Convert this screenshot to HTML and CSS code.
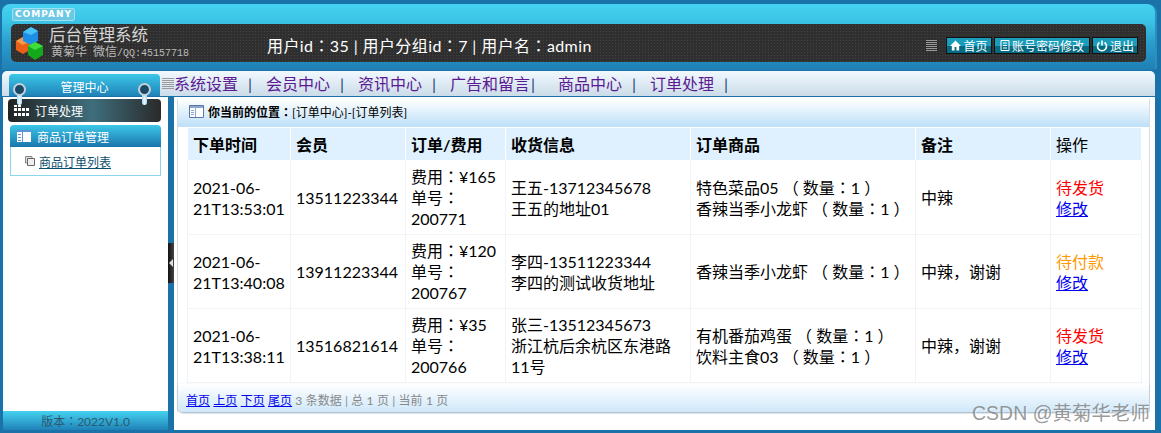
FILE: index.html
```html
<!DOCTYPE html>
<html lang="zh-CN">
  <head>
    <meta charset="UTF-8" />
    <title>后台管理系统</title>
    <link rel="stylesheet" href="styles.css">
  </head>
  <body>
    <div class="app">
      <header class="top">
        <div class="company">COMPANY</div>
        <div class="top-bar">
          <svg class="logo" width="30" height="34" viewBox="0 0 30 34">
            <polygon points="2,15 9,11 16,15 16,24 9,28 2,24" fill="#e8601a" />
            <polygon points="2,15 9,11 16,15 9,19" fill="#f79a4a" />
            <polygon points="9,6 17,1 24,5 24,15 17,19 9,15" fill="#1d8fe8" />
            <polygon points="9,6 17,1 24,5 17,9" fill="#49c4f7" />
            <polygon points="14,20 21,16 29,20 29,29 21,34 14,29" fill="#14a81c" />
            <polygon points="14,20 21,16 29,20 21,24" fill="#3fdc3a" />
          </svg>
          <div class="brand">
            <div class="brand-title">后台管理系统</div>
            <div class="brand-sub">黄菊华 微信<span class="brand-num">/QQ:45157718</span></div>
          </div>
          <div class="user-info">用户id<span class="colon" lang="zh-TW">：</span>35 | 用户分组id<span class="colon" lang="zh-TW">：</span>7 | 用户名<span class="colon" lang="zh-TW">：</span>admin</div>
          <div class="top-tools">
            <span class="grip grip-dark"></span>
            <a class="tool-btn" href="#">
              <svg width="11" height="11" viewBox="0 0 12 11"><path d="M6 0 12 6H10V11H7V7H5V11H2V6H0Z" fill="#fff" /></svg>首页</a>
            <a class="tool-btn tool-wide" href="#">
              <svg width="10" height="11" viewBox="0 0 10 11"><path d="M1 .5H9V10.500H1ZM3 3H7M3 5.500H7M3 8H7" fill="none" stroke="#fff" /></svg>账号密码修改</a>
            <a class="tool-btn" href="#">
              <svg width="12" height="12" viewBox="0 0 12 12"><path d="M3.500 2.500A4.500 4.500 0 1 0 8.500 2.500M6 .5V5.500" fill="none" stroke="#fff" stroke-width="1.600" /></svg>退出</a>
          </div>
        </div>
      </header>

      <nav class="nav">
        <div class="nav-tab">管理中心</div>
        <span class="grip"></span>
        <div class="nav-links">
          <a href="#">系统设置</a><span class="sep">|</span>
          <a href="#">会员中心</a><span class="sep">|</span>
          <a href="#">资讯中心</a><span class="sep">|</span>
          <a href="#">广告和留言</a><span class="sep">|</span>
          <a href="#">商品中心</a><span class="sep">|</span>
          <a href="#">订单处理</a><span class="sep">|</span>
        </div>
        <i class="pin pin-left"></i>
        <i class="pin pin-right"></i>
      </nav>

      <div class="content">
        <aside class="side">
          <div class="side-current">
            <svg width="15" height="11" viewBox="0 0 15 11">
              <path d="M0 3H3V6H0ZM4 3H7V6H4ZM8 3H11V6H8ZM12 3H15V6H12ZM0 8H3V11H0ZM4 8H7V11H4ZM8 8H11V11H8ZM12 8H15V11H12ZM0 0H3V2H0ZM4 0H7V2H4Z" fill="#fff" />
            </svg>
            订单处理
          </div>
          <div class="side-group">
            <div class="side-group-title">
              <svg width="14" height="12" viewBox="0 0 14 12">
                <path d="M0 0H14V12H0Z" fill="#fff" />
                <path d="M0 0H14V2H0ZM5 2H6V12H5ZM1 4H4V5H1ZM1 7H4V8H1ZM1 10H4V11H1Z" fill="#5b95d8" />
              </svg>
              商品订单管理
            </div>
            <div class="side-group-body">
              <svg width="10" height="10" viewBox="0 0 10 10">
                <path d="M.5.5H7V7H.5Z" fill="#ddd" stroke="#888" />
                <path d="M2.500 2.500H9.500V9.500H2.500Z" fill="#eee" stroke="#666" />
              </svg>
              <a href="#">商品订单列表</a>
            </div>
          </div>
          <div class="side-foot">版本<span class="colon" lang="zh-TW">：</span>2022V1.0</div>
        </aside>

        <div class="splitter"><span class="arrow"></span></div>

        <main class="main">
          <div class="main-box">
            <div class="crumb">
              <svg width="15" height="13" viewBox="0 0 15 13">
                <path d="M.5.5H14.500V12.500H.5Z" fill="#fff" stroke="#5a76a8" />
                <path d="M1 1H14V3H1ZM6 3H7V12H6ZM2 5H5V6H2ZM2 7H5V8H2ZM2 9H5V10H2Z" fill="#8fa6cc" />
              </svg>
              <b>你当前的位置<span class="colon" lang="zh-TW">：</span></b>[订单中心]-[订单列表]
            </div>

            <table class="orders">
              <colgroup>
                <col class="c-time" /><col class="c-user" /><col class="c-fee" /><col class="c-addr" />
                <col class="c-goods" /><col class="c-note" /><col class="c-op" />
              </colgroup>
              <thead>
                <tr>
                  <th>下单时间</th><th>会员</th><th>订单/费用</th><th>收货信息</th>
                  <th>订单商品</th><th>备注</th><th class="th-plain">操作</th>
                </tr>
              </thead>
              <tbody>
                <tr>
                  <td>2021-06-21T13:53:01</td>
                  <td>13511223344</td>
                  <td>费用<span class="colon" lang="zh-TW">：</span>¥165<br />单号<span class="colon" lang="zh-TW">：</span>200771</td>
                  <td>王五-13712345678<br />王五的地址01</td>
                  <td>特色菜品05 （ 数量<span class="colon" lang="zh-TW">：</span>1 ）<br />香辣当季小龙虾 （ 数量<span class="colon" lang="zh-TW">：</span>1 ）</td>
                  <td>中辣</td>
                  <td><span class="st-ship">待发货</span><br /><a href="#">修改</a></td>
                </tr>
                <tr>
                  <td>2021-06-21T13:40:08</td>
                  <td>13911223344</td>
                  <td>费用<span class="colon" lang="zh-TW">：</span>¥120<br />单号<span class="colon" lang="zh-TW">：</span>200767</td>
                  <td>李四-13511223344<br />李四的测试收货地址</td>
                  <td>香辣当季小龙虾 （ 数量<span class="colon" lang="zh-TW">：</span>1 ）</td>
                  <td>中辣，谢谢</td>
                  <td><span class="st-pay">待付款</span><br /><a href="#">修改</a></td>
                </tr>
                <tr>
                  <td>2021-06-21T13:38:11</td>
                  <td>13516821614</td>
                  <td>费用<span class="colon" lang="zh-TW">：</span>¥35<br />单号<span class="colon" lang="zh-TW">：</span>200766</td>
                  <td>张三-13512345673<br />浙江杭后余杭区东港路<br />11号</td>
                  <td>有机番茄鸡蛋 （ 数量<span class="colon" lang="zh-TW">：</span>1 ）<br />饮料主食03 （ 数量<span class="colon" lang="zh-TW">：</span>1 ）</td>
                  <td>中辣，谢谢</td>
                  <td><span class="st-ship">待发货</span><br /><a href="#">修改</a></td>
                </tr>
              </tbody>
            </table>

            <div class="pager">
              <a href="#">首页</a> <a href="#">上页</a> <a href="#">下页</a> <a href="#">尾页</a>
              3 条数据 | 总 1 页 | 当前 1 页
            </div>
          </div>
        </main>
      </div>
      <div class="watermark">CSDN @黄菊华老师</div>
    </div>
  </body>
</html>
```
FILE: styles.css
```css
html,
body {
  margin: 0;
  height: 100%;
  overflow: hidden;
}

body {
  background-color: #1a72a8;
  font-family: Lato, "Noto Sans CJK SC", sans-serif;
  color: #000;
}

/* the traditional-chinese glyph of the full width colon sits in the centre */
.colon {
  display: inline-block;
  font-family: "Noto Sans CJK TC", sans-serif;
}

.app {
  position: relative;
  display: flex;
  flex-direction: column;
  height: 433px;
  padding: 4px 6px 3px 2px;
  box-sizing: border-box;
}

/* header */
.top {
  height: 66px;
  flex: none;
  box-sizing: border-box;
  padding: 4px 9px 0 9px;
  border-radius: 8px 8px 0 0;
  background: linear-gradient(#45d2f0, #3cc4e6 25%, #2a9ccb 60%, #1f7fb5);
  box-shadow: 3px 0 0 -1px #2a8fc0;
}

.company {
  width: 63px;
  height: 13px;
  margin-left: 1px;
  border: 1px solid #9fe0f2;
  border-radius: 2px;
  box-sizing: border-box;
  background: #6cc9e4;
  color: #fff;
  font: bold 9px/11px "DejaVu Sans", sans-serif;
  letter-spacing: 1px;
  text-align: center;
}

.top-bar {
  display: flex;
  align-items: center;
  height: 38px;
  margin-top: 3px;
  border-radius: 5px;
  background-color: #2f2f2f;
  background-image: radial-gradient(#444 1px, transparent 1px);
  background-size: 3px 3px;
}

.logo {
  flex: none;
  margin-left: 3px;
}

.brand {
  width: 218px;
  flex: none;
  margin-left: 5px;
  color: #d6d6d6;
}

.brand-title {
  font-size: 16.5px;
  line-height: 20px;
  margin-top: -1px;
}

.brand-sub {
  margin-left: 2px;
  font-size: 12px;
  line-height: 14px;
  color: #bbb;
  word-spacing: 3px;
}

.brand-num {
  font-family: "Liberation Mono", monospace;
  font-size: 10px;
}

.user-info {
  color: #fff;
  font-size: 16px;
  padding-top: 3px;
  letter-spacing: 0.4px;
}

.top-tools {
  display: flex;
  align-items: center;
  gap: 2px;
  margin-left: auto;
  margin-top: 5px;
  padding-right: 8px;
}

.grip {
  display: block;
  width: 12px;
  height: 12px;
  flex: none;
  background: repeating-linear-gradient(#999 0 1px, transparent 1px 2px);
}

.grip-dark {
  width: 11px;
  margin-right: 7px;
}

.tool-btn {
  display: flex;
  align-items: center;
  justify-content: center;
  gap: 2px;
  width: 46px;
  height: 17px;
  box-sizing: border-box;
  border: 1px solid #111;
  background: linear-gradient(#1a9dbb 50%, #066a82 50%);
  color: #fff;
  font-size: 12px;
  text-decoration: none;
}

.tool-wide {
  width: 96px;
}

/* nav row */
.nav {
  position: relative;
  display: flex;
  align-items: center;
  height: 26px;
  flex: none;
  margin-top: 1px;
  border-radius: 5px 5px 0 0;
  background: linear-gradient(#f2f9ff, #cbdce8);
  border-bottom: 1px solid #1a72a8;
  box-sizing: border-box;
}

.nav-tab {
  align-self: flex-end;
  width: 151px;
  height: 22px;
  margin-left: 7px;
  border-radius: 4px 4px 0 0;
  background: linear-gradient(#3cc7e8, #1f82b8);
  color: #fff;
  font-size: 12px;
  line-height: 27px;
  text-align: center;
}

.nav .grip {
  margin-left: 2px;
}

.nav-links {
  display: flex;
  padding-top: 1px;
  font-size: 16px;
  line-height: 26px;
}

.nav-links a {
  color: #5b1a92;
  text-decoration: none;
}

.nav-links .sep {
  width: 28px;
  padding-left: 10px;
  box-sizing: border-box;
  color: #1b3f7a;
}

.nav-links .sep:nth-child(8) {
  padding-left: 1px;
}

.pin {
  position: absolute;
  top: 18px;
  width: 5px;
  height: 16px;
  border-radius: 3px;
  background: linear-gradient(90deg, #a8d8f4, #e4f6ff 50%, #a8d8f4);
  z-index: 2;
}

.pin::before {
  content: "";
  position: absolute;
  z-index: -1;
  top: -6px;
  left: -4px;
  width: 9px;
  height: 9px;
  border: 2px solid #c6d0d8;
  border-radius: 50%;
  background: #1c4a66;
}

.pin-left {
  left: 15px;
}

.pin-right {
  left: 140px;
}

/* body row */
.content {
  display: flex;
  flex: 1;
  min-height: 0;
}

.side {
  display: flex;
  flex-direction: column;
  width: 165px;
  flex: none;
  margin-left: 1px;
  background: #fff;
}

.side-current {
  display: flex;
  align-items: center;
  gap: 6px;
  height: 23px;
  margin: 2px 7px 0 5px;
  padding-left: 6px;
  border-radius: 4px;
  background: linear-gradient(90deg, #222, #3e6e7c 55%, #2a2a2a);
  color: #fff;
  font-size: 12px;
}

.side-group {
  margin: 3px 7px 0 7px;
}

.side-group-title {
  display: flex;
  align-items: center;
  gap: 6px;
  height: 22px;
  padding-left: 7px;
  border-radius: 4px 4px 0 0;
  background: linear-gradient(#3cc7e8, #1a76ad);
  color: #fff;
  font-size: 12px;
}

.side-group-body {
  display: flex;
  align-items: center;
  gap: 4px;
  height: 29px;
  padding-left: 14px;
  border: 1px solid #8ad6ec;
  border-top: 0;
  box-sizing: border-box;
  font-size: 12px;
}

.side-group-body a {
  color: #0d4f6e;
}

.side-foot {
  margin-top: auto;
  height: 19px;
  background: linear-gradient(#45d2f0, #1f82b8);
  color: #2a5a70;
  font-size: 12px;
  line-height: 20px;
  text-align: center;
}

.splitter {
  position: relative;
  width: 6px;
  flex: none;
}

.arrow {
  position: absolute;
  top: 146px;
  left: 0;
  width: 6px;
  height: 40px;
  box-sizing: border-box;
  background: linear-gradient(90deg, #111, #444);
}

.arrow::after {
  content: "";
  position: absolute;
  top: 16px;
  left: 1px;
  border: 4px solid transparent;
  border-left-width: 0;
  border-right-color: #ddd;
}

/* main area */
.main {
  flex: 1;
  min-width: 0;
  padding: 2px 5px 0 3px;
  background: #fff;
}

.main-box {
  border: solid #d5dde5;
  border-width: 0 1px 0 1px;
}

.crumb {
  display: flex;
  align-items: center;
  height: 28px;
  padding: 0 0 3px 11px;
  border-radius: 5px 5px 0 0;
  box-sizing: border-box;
  background: linear-gradient(#fff, #bde0f8);
  font-size: 12px;
}

.crumb svg {
  margin-right: 4px;
}

.orders {
  width: 954px;
  margin: 0 0 0 9px;
  table-layout: fixed;
  border-collapse: collapse;
  font-size: 16px;
  line-height: 21px;
}

.c-time { width: 103px; }
.c-user { width: 115px; }
.c-fee { width: 100px; }
.c-addr { width: 185px; }
.c-goods { width: 225px; }
.c-note { width: 135px; }
.c-op { width: 91px; }

.orders th,
.orders td {
  padding: 5px;
  border: 1px solid #f1f3f6;
  text-align: left;
  word-break: break-word;
}

.orders th {
  height: 33px;
  box-sizing: border-box;
  padding: 0 5px;
  background: #dff1fe;
  border-color: #fff;
  font-weight: bold;
}

.orders .th-plain {
  font-weight: normal;
}

.orders td {
  height: 74px;
  box-sizing: border-box;
}

.orders a {
  color: #00e;
}

.st-ship {
  color: #f00;
}

.st-pay {
  color: #f90;
}

.pager {
  height: 28px;
  margin-top: 1px;
  padding-left: 8px;
  border-radius: 0 0 5px 5px;
  box-sizing: border-box;
  background: linear-gradient(#fff, #cfe8fa);
  box-shadow: 0 1px 2px #9ab;
  color: #888;
  font-size: 12px;
  line-height: 33px;
  word-spacing: 0.25px;
}

.pager a {
  color: #00e;
}

.watermark {
  position: absolute;
  right: 11px;
  top: 401px;
  color: rgba(110, 110, 110, 0.7);
  text-shadow: 1px 1px 1px rgba(255, 255, 255, 0.6);
  font-family: "Liberation Sans", "Noto Sans CJK SC", sans-serif;
  font-size: 19.5px;
  line-height: 24px;
}
```
